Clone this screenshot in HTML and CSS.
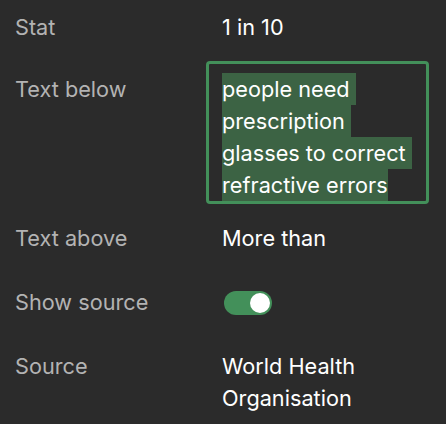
FILE: index.html
```html
<!DOCTYPE html>
<html lang="en">
<head>
    <meta charset="UTF-8">
    <meta name="viewport" content="width=device-width, initial-scale=1.0">
    <title>Stat settings</title>
    <link rel="stylesheet" href="styles.css">
</head>
<body>
    <div class="panel">
        <div class="row row-stat">
            <div class="label">Stat</div>
            <div class="value">1 in 10</div>
        </div>
        <div class="row row-below">
            <div class="label">Text below</div>
            <div class="editor">
                <span class="sel">people need </span>
                <span class="sel">prescription </span>
                <span class="sel">glasses to correct </span>
                <span class="sel">refractive errors</span>
            </div>
        </div>
        <div class="row">
            <div class="label">Text above</div>
            <div class="value">More than</div>
        </div>
        <div class="row">
            <div class="label">Show source</div>
            <div class="value">
                <span class="toggle on"><span class="knob"></span></span>
            </div>
        </div>
        <div class="row">
            <div class="label">Source</div>
            <div class="value">World Health<br>Organisation</div>
        </div>
    </div>
</body>
</html>
```

FILE: styles.css
```css
body {
    font-family: 'Inter', 'Liberation Sans', sans-serif;
    background-color: #2b2b2b;
    color: #fff;
    margin: 0;
    padding: 0;
}
.panel {
    padding: 11px 0 0 15px;
}
.row {
    display: grid;
    grid-template-columns: 207px 1fr;
    font-size: 21.7px;
    line-height: 32px;
    margin-bottom: 32px;
}
.row:last-child {
    margin-bottom: 0;
}
.row-stat {
    margin-bottom: 18px;
}
.row-below {
    margin-bottom: 18px;
}
.row-below .label {
    padding-top: 12px;
}
.label {
    color: #b3b3b3;
}
.value {
    color: #fff;
    display: flex;
    align-items: center;
}
.editor {
    margin-left: -16px;
    margin-right: 17px;
    border: 3px solid #43905a;
    border-radius: 4px;
    padding: 9px 13px 0;
    height: 128px;
    overflow: hidden;
}
.sel {
    display: block;
    width: fit-content;
    white-space: pre;
    background-color: #3c6344;
}
.toggle {
    display: inline-block;
    position: relative;
    width: 48px;
    height: 24px;
    border-radius: 12px;
    background-color: #555;
    margin-left: 2px;
    margin-top: 2px;
}
.toggle.on {
    background-color: #43905a;
}
.knob {
    position: absolute;
    top: 2px;
    left: 2px;
    width: 20px;
    height: 20px;
    border-radius: 50%;
    background-color: #fff;
}
.toggle.on .knob {
    left: 26px;
}
```
